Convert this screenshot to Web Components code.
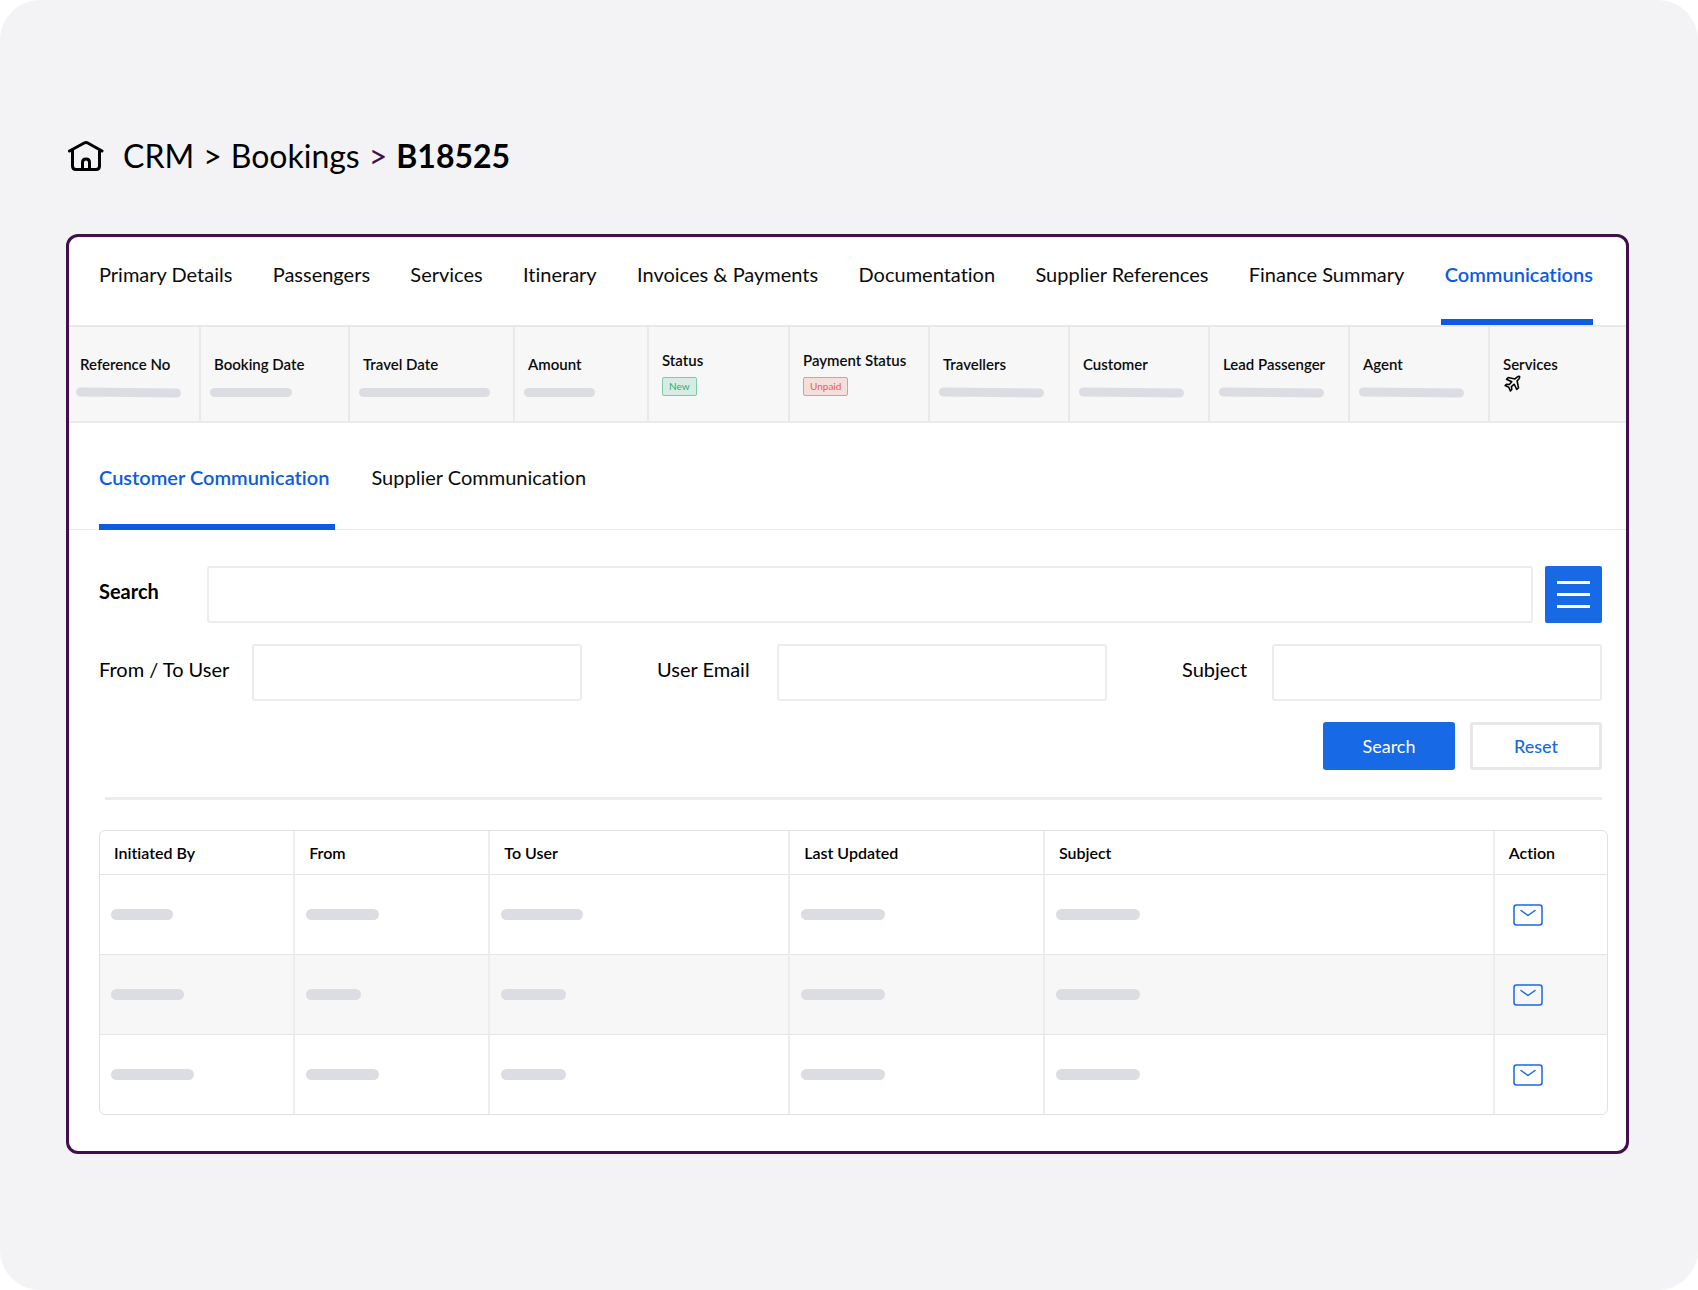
<!DOCTYPE html>
<html lang="en">
<head>
<meta charset="utf-8">
<meta name="viewport" content="width=device-width, initial-scale=1">
<title>Booking B18525 – Communications</title>
<style>
  body {
    margin: 0;
    background: #fff;
    color: #0b0b0c;
    font-family: Lato, "Open Sans", sans-serif;
    font-variant-ligatures: none;
    --blue: #0d5be1;
    --button-blue: #1769e5;
    --line: #e9e9e9;
    --strip: #f7f7f7;
    --bone: #dcdde2;
    --plum: #410f4c;
  }
</style>
</head>
<body>
<app-page>
  <crumb-trail slot="top"></crumb-trail>
  <booking-panel>
    <tab-bar label="Booking sections" spread>
      <tab-item>Primary Details</tab-item>
      <tab-item>Passengers</tab-item>
      <tab-item>Services</tab-item>
      <tab-item>Itinerary</tab-item>
      <tab-item>Invoices &amp; Payments</tab-item>
      <tab-item>Documentation</tab-item>
      <tab-item>Supplier References</tab-item>
      <tab-item>Finance Summary</tab-item>
      <tab-item selected>Communications</tab-item>
    </tab-bar>
    <info-strip>
      <info-cell label="Reference No"><bone-bar size="105" tilt></bone-bar></info-cell>
      <info-cell label="Booking Date"><bone-bar size="82"></bone-bar></info-cell>
      <info-cell label="Travel Date"><bone-bar size="131"></bone-bar></info-cell>
      <info-cell label="Amount"><bone-bar size="71"></bone-bar></info-cell>
      <info-cell label="Status" kind="badge"><state-badge tone="good">New</state-badge></info-cell>
      <info-cell label="Payment Status" kind="badge"><state-badge tone="bad">Unpaid</state-badge></info-cell>
      <info-cell label="Travellers"><bone-bar size="105" tilt></bone-bar></info-cell>
      <info-cell label="Customer"><bone-bar size="105" tilt></bone-bar></info-cell>
      <info-cell label="Lead Passenger"><bone-bar size="105" tilt></bone-bar></info-cell>
      <info-cell label="Agent"><bone-bar size="105" tilt></bone-bar></info-cell>
      <info-cell label="Services" kind="icon"><plane-icon></plane-icon></info-cell>
    </info-strip>
    <tab-bar label="Communication type">
      <tab-item selected>Customer Communication</tab-item>
      <tab-item>Supplier Communication</tab-item>
    </tab-bar>
    <search-form></search-form>
    <message-table></message-table>
  </booking-panel>
</app-page>

<script>
  function define(name, html, setup) {
    const template = document.createElement("template");
    template.innerHTML = html;
    customElements.define(name, class extends HTMLElement {
      connectedCallback() {
        if (this.shadowRoot) return;
        const root = this.attachShadow({ mode: "open" });
        root.append(template.content.cloneNode(true));
        if (setup) setup(this, root);
      }
    });
  }

  define("app-page", `
    <style>
      :host { display: block; box-sizing: border-box; min-height: 100vh; padding: 136px 69px 48px 66px; background: #f3f3f5; border-radius: 40px; }
      main { margin-top: 58px; }
    </style>
    <slot name="top"></slot>
    <main><slot></slot></main>`);

  define("crumb-trail", `
    <style>
      :host { display: block; }
      nav { display: flex; align-items: center; padding-left: 2px; gap: 19px; font-size: 32px; line-height: 40px; color: #000; }
      a { color: inherit; text-decoration: none; }
      .home { display: flex; }
      ol { display: flex; gap: 9px; margin: 0; padding: 0; list-style: none; }
      .plum { color: var(--plum); }
      strong { font-weight: 700; }
      svg { display: block; }
    </style>
    <nav aria-label="Breadcrumb">
      <a class="home" href="#home" aria-label="Home">
        <svg width="36" height="32" viewBox="0 0 36 32" fill="none" stroke="#000" stroke-width="3" stroke-linecap="round" stroke-linejoin="round">
          <path d="M1.5 11 L16.200 3 Q18 2 19.800 3 L34 11"/>
          <path d="M4.500 10 V26 Q4.500 29.500 8 29.500 H28 Q31.500 29.500 31.500 26 V10"/>
          <path d="M14.500 29 V22.500 Q14.500 19 18 19 Q21.500 19 21.500 22.500 V29"/>
        </svg>
      </a>
      <ol>
        <li><a href="#crm">CRM</a></li><li aria-hidden="true">&gt;</li>
        <li><a href="#bookings">Bookings</a></li><li class="plum" aria-hidden="true">&gt;</li>
        <li><strong>B18525</strong></li>
      </ol>
    </nav>`);

  define("booking-panel", `
    <style>
      :host { display: block; background: #fff; border: 3px solid var(--plum); border-radius: 12px; overflow: hidden; padding-bottom: 36px; }
    </style>
    <slot></slot>`);

  define("tab-bar", `
    <style>
      :host { display: block; border-bottom: 1px solid var(--line); --tab-pad: 0 6px 35px 0; --tab-drop: -1px; }
      :host([spread]) { border-bottom-width: 2px; --tab-pad: 0 0 33px 4px; --tab-drop: 0px; }
      div { display: flex; gap: 36px; padding: 42px 34px 0 30px; }
      :host([spread]) div { justify-content: space-between; gap: 8px; padding: 25px 33px 0 26px; }
    </style>
    <div role="tablist"><slot></slot></div>`,
    (host, root) => root.querySelector("div").setAttribute("aria-label", host.getAttribute("label")));

  define("tab-item", `
    <style>
      :host { display: block; margin-bottom: var(--tab-drop); }
      button { display: block; margin: 0; padding: var(--tab-pad); border: 0; border-bottom: 6px solid transparent; background: none; color: inherit; font: 400 20px/24px Lato, sans-serif; font-variant-ligatures: none; white-space: nowrap; cursor: pointer; }
      :host([selected]) button { color: var(--blue); border-bottom-color: var(--blue); font-weight: 600; }
    </style>
    <button type="button" role="tab"><slot></slot></button>`,
    (host, root) => root.querySelector("button").setAttribute("aria-selected", host.hasAttribute("selected")));

  define("info-strip", `
    <style>
      :host { display: grid; grid-template-columns: 132fr 149fr 165fr 134fr 141fr 140fr 140fr 140fr 140fr 140fr 136fr; height: 94px; background: var(--strip); border-bottom: 2px solid #ebebeb; }
      ::slotted(:not(:last-child)) { border-right: 2px solid var(--line); }
      ::slotted(:first-child) { --inset: 11px; }
    </style>
    <slot></slot>`);

  define("info-cell", `
    <style>
      :host { display: block; box-sizing: border-box; min-width: 0; padding-top: 28px; padding-left: var(--inset, 13px); font-size: 15px; line-height: 18px; }
      .label { font-weight: 600; white-space: nowrap; }
      .value { display: flex; margin-top: 15px; margin-left: -4px; }
      :host([kind="badge"]) { padding-top: 24px; }
      :host([kind="badge"]) .value { margin: 8px 0 0; }
      :host([kind="icon"]) .value { margin: 2px 0 0 1px; }
    </style>
    <div class="label"></div>
    <div class="value"><slot></slot></div>`,
    (host, root) => root.querySelector(".label").textContent = host.getAttribute("label"));

  define("bone-bar", `
    <style>
      :host { display: block; height: 9px; border-radius: 5px; background: var(--bone); }
      :host([tall]) { height: 11px; border-radius: 6px; }
      :host([tilt]) { transform: skewY(0.5deg); }
    </style>`,
    (host) => host.style.width = host.getAttribute("size") + "px");

  define("state-badge", `
    <style>
      :host { display: block; padding: 0 6px; border: 1px solid; border-radius: 2px; font-size: 10px; line-height: 17px; }
      :host([tone="good"]) { color: #22ae7b; background: #d8ece4; border-color: #74cfac; }
      :host([tone="bad"]) { color: #ea5c56; background: #f5dfdd; border-color: #f09390; }
    </style>
    <slot></slot>`);

  define("plane-icon", `
    <style>:host { display: block; } svg { display: block; }</style>
    <svg width="17" height="17" viewBox="0 0 24 24" fill="none" stroke="#000" stroke-width="2.200" stroke-linecap="round" stroke-linejoin="round" role="img" aria-label="Flight">
      <path d="M15.500 5.500 L18.500 3 Q20.500 1.500 22 2 Q22.500 3.500 21 5.500 L18.500 8.500 L20.500 18 L18 20.500 L14.500 13 L10.500 16.500 L11 20.500 L9 22.500 L6.800 17.200 L1.500 15 L3.500 13 L7.500 13.500 L11 9.500 L3.500 6 L6 3.500 Z"/>
    </svg>`);

  define("search-form", `
    <style>
      :host { display: block; padding: 36px 24px 0 30px; font-size: 20px; line-height: 24px; color: #000; }
      .main { display: grid; grid-template-columns: 108px 1fr 57px; align-items: center; }
      .main input { margin-right: 12px; }
      .fields { display: grid; grid-template-columns: 153px 1fr 195px 1fr 165px 1fr; align-items: center; margin-top: 21px; }
      label { padding-bottom: 7px; white-space: nowrap; }
      .fields label + input + label, .fields label:last-of-type { padding-left: 75px; }
      .main label { font-weight: 700; }
      input { box-sizing: border-box; min-width: 0; height: 57px; margin: 0; padding: 0 16px; border: 2px solid #ececec; border-radius: 3px; background: #fff; font: inherit; }
      .menu { display: flex; flex-direction: column; justify-content: center; align-items: center; gap: 9px; height: 57px; padding: 0; border: 0; border-radius: 2px; background: var(--button-blue); cursor: pointer; }
      .menu span { width: 33px; height: 3px; background: #fff; }
      .actions { display: flex; justify-content: flex-end; gap: 15px; margin-top: 21px; }
      .actions button { box-sizing: border-box; width: 132px; height: 48px; border: 3px solid var(--button-blue); border-radius: 3px; background: var(--button-blue); color: #fff; font: 400 18px/24px Lato, sans-serif; cursor: pointer; }
      .actions .reset { border-color: #e8e8e8; background: #fff; color: var(--button-blue); font-weight: 500; }
      hr { height: 3px; margin: 27px 0 30px 6px; border: 0; background: #ebebeb; }
    </style>
    <form>
      <div class="main">
        <label for="q">Search</label>
        <input id="q" type="text">
        <button class="menu" type="button" aria-label="Filters"><span></span><span></span><span></span></button>
      </div>
      <div class="fields">
        <label for="user">From / To User</label><input id="user" type="text">
        <label for="email">User Email</label><input id="email" type="text">
        <label for="subject">Subject</label><input id="subject" type="text">
      </div>
      <div class="actions">
        <button type="button">Search</button>
        <button class="reset" type="reset">Reset</button>
      </div>
    </form>
    <hr>`);

  define("mail-icon", `
    <style>:host { display: block; } svg { display: block; }</style>
    <svg width="30" height="22" viewBox="0 0 30 22" fill="none" stroke="#1769e5" stroke-width="1.500" stroke-linecap="round" stroke-linejoin="round">
      <rect x="1" y="1" width="28" height="20" rx="2.500"/>
      <path d="M8 6.500 L15 11.500 L22 6.500"/>
    </svg>`);

  define("message-table", `
    <style>
      :host { display: block; margin: 0 18px 0 30px; border: 1px solid #e1e1e1; border-radius: 6px; overflow: hidden; }
      table { width: 100%; table-layout: fixed; border-collapse: separate; border-spacing: 0; }
      th, td { box-sizing: border-box; padding: 0 0 0 11px; border-bottom: 1px solid #e4e4e4; text-align: left; vertical-align: middle; }
      th:not(:last-child), td:not(:last-child) { border-right: 2px solid #ededed; }
      th { height: 44px; padding-left: 14px; font-size: 16px; line-height: 20px; font-weight: 600; color: #000; }
      td { height: 80px; }
      tbody tr:nth-child(even) { background: var(--strip); }
      tbody tr:last-child td { height: 79px; border-bottom: 0; }
      button { display: block; margin: 0 0 0 7px; padding: 0; border: 0; background: none; cursor: pointer; }
    </style>
    <table>
      <colgroup><col style="width:12.950%"><col style="width:12.950%"><col style="width:19.900%"><col style="width:16.900%"><col style="width:29.850%"><col></colgroup>
      <thead><tr><th scope="col">Initiated By</th><th scope="col">From</th><th scope="col">To User</th><th scope="col">Last Updated</th><th scope="col">Subject</th><th scope="col">Action</th></tr></thead>
      <tbody></tbody>
    </table>`,
    (host, root) => {
      const rows = [[62, 73, 82, 84, 84], [73, 55, 65, 84, 84], [83, 73, 65, 84, 84]];
      root.querySelector("tbody").innerHTML = rows.map(row =>
        `<tr>${row.map(w => `<td><bone-bar tall size="${w}"></bone-bar></td>`).join("")}
        <td><button type="button" aria-label="Open message"><mail-icon></mail-icon></button></td></tr>`).join("");
    });
</script>
</body>
</html>
